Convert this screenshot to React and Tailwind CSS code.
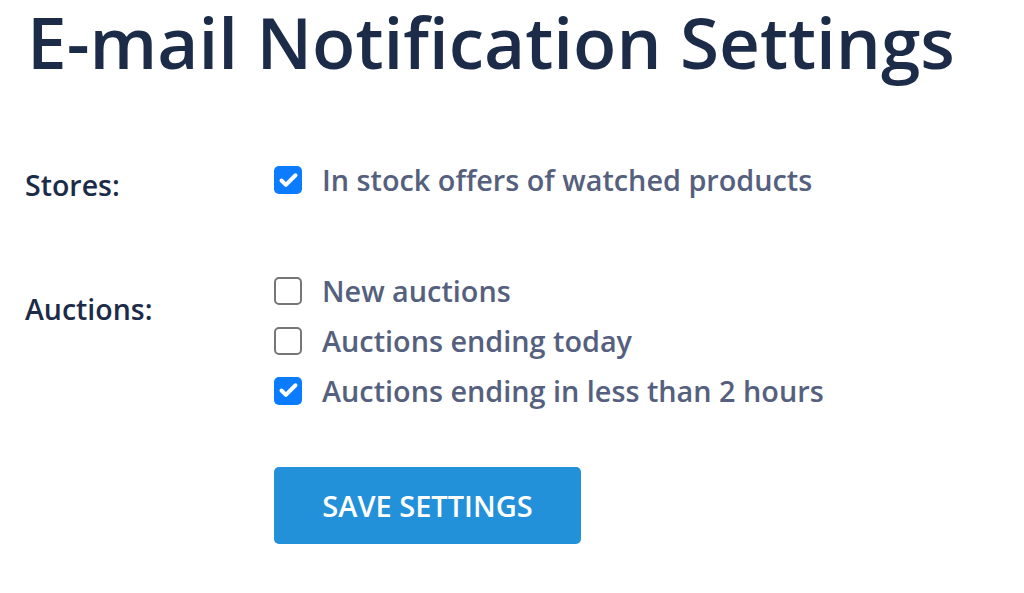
import { Check } from 'lucide-react'

function Box({ checked }) {
  if (checked) {
    return (
      <span className="flex h-[28px] w-[28px] shrink-0 items-center justify-center rounded-[5px] bg-[#0b7bff]">
        <Check className="h-[21px] w-[21px] text-white" strokeWidth={4.5} />
      </span>
    )
  }
  return <span className="h-[28px] w-[28px] shrink-0 rounded-[5px] border-2 border-[#767676] bg-white" />
}

function Option({ checked, children }) {
  return (
    <label className="flex h-[50px] items-center gap-[20px]">
      <Box checked={checked} />
      <span className="text-[28.8px] font-semibold text-[#55607e]">{children}</span>
    </label>
  )
}

export default function App() {
  return (
    <div className="min-h-[593px] bg-white pl-[25px] font-['Open_Sans',sans-serif]">
      <h1 className="pl-[2px] pt-[3px] text-[71px] font-semibold leading-[78px] text-[#1c2b48]">
        E-mail Notification Settings
      </h1>

      <div className="mt-[74px] flex">
        <div className="w-[249px] pt-[9px] text-[28.5px] font-semibold text-[#1c2b48]">Stores:</div>
        <div>
          <Option checked>In stock offers of watched products</Option>
        </div>
      </div>

      <div className="mt-[59px] flex">
        <div className="w-[249px] pt-[22px] text-[28.5px] font-semibold text-[#1c2b48]">Auctions:</div>
        <div>
          <Option>New auctions</Option>
          <Option>Auctions ending today</Option>
          <Option checked>Auctions ending in less than 2 hours</Option>
        </div>
      </div>

      <div className="mt-[51px] pl-[249px]">
        <button className="h-[77px] w-[307px] rounded-[5px] bg-[#2391d9] text-[29px] font-semibold text-white">
          SAVE SETTINGS
        </button>
      </div>
    </div>
  )
}
